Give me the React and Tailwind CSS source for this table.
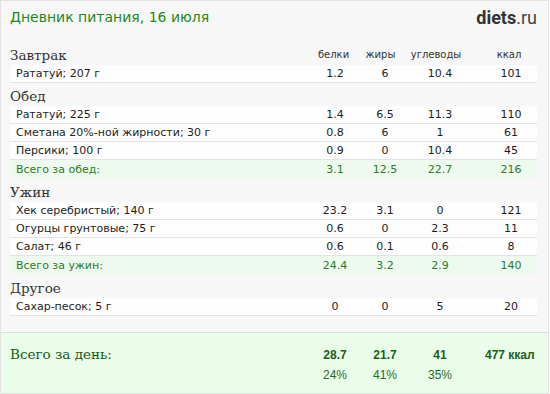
import React from 'react';

const sections = [
  {
    title: 'Завтрак',
    rows: [['Рататуй; 207 г', '1.2', '6', '10.4', '101']],
  },
  {
    title: 'Обед',
    rows: [
      ['Рататуй; 225 г', '1.4', '6.5', '11.3', '110'],
      ['Сметана 20%-ной жирности; 30 г', '0.8', '6', '1', '61'],
      ['Персики; 100 г', '0.9', '0', '10.4', '45'],
    ],
    total: ['Всего за обед:', '3.1', '12.5', '22.7', '216'],
  },
  {
    title: 'Ужин',
    rows: [
      ['Хек серебристый; 140 г', '23.2', '3.1', '0', '121'],
      ['Огурцы грунтовые; 75 г', '0.6', '0', '2.3', '11'],
      ['Салат; 46 г', '0.6', '0.1', '0.6', '8'],
    ],
    total: ['Всего за ужин:', '24.4', '3.2', '2.9', '140'],
  },
  {
    title: 'Другое',
    rows: [['Сахар-песок; 5 г', '0', '0', '5', '20']],
  },
];

const sans = { fontFamily: '"DejaVu Sans", Verdana, sans-serif' };
const serif = { fontFamily: '"DejaVu Serif", Georgia, serif' };

// Four number columns, same widths everywhere so values line up
function Cols({ values, className = '' }) {
  return (
    <>
      <div className={`w-[50px] text-center ${className}`}>{values[0]}</div>
      <div className={`w-[50px] text-center ${className}`}>{values[1]}</div>
      <div className={`w-[60px] text-center ${className}`}>{values[2]}</div>
      <div className={`ml-[15px] w-[52px] text-center ${className}`}>{values[3]}</div>
    </>
  );
}

function Row({ row, total = false }) {
  return (
    <div
      className={`flex h-[18px] items-center text-[11px] leading-none ${
        total ? 'bg-[#eefaee] text-[#2b7a2b]' : 'border-b border-[#e3e3e3] bg-[#fdfdfd] text-[#1e1e1e]'
      }`}
      style={sans}
    >
      <div className="flex-1 pl-[6px]">{row[0]}</div>
      <Cols values={row.slice(1)} />
    </div>
  );
}

function Section({ section, first }) {
  return (
    <div className={section.total ? 'mb-[1px]' : ''}>
      <div className="flex h-[23px] items-end pb-[3px]">
        <div className="flex-1 text-[13.5px] leading-none text-[#333]" style={serif}>
          {section.title}
        </div>
        {first && (
          <div className="flex pb-[2px] text-[10px] leading-none text-[#333]" style={sans}>
            <div className="w-[50px] pr-[3px] text-center">белки</div>
            <div className="w-[50px] pr-[9px] text-center">жиры</div>
            <div className="w-[60px] pr-[8px] text-center">углеводы</div>
            <div className="ml-[15px] w-[52px] pr-[4px] text-center">ккал</div>
          </div>
        )}
      </div>
      {section.rows.map((r, i) => (
        <Row key={i} row={r} />
      ))}
      {section.total && <Row row={section.total} total />}
    </div>
  );
}

export default function App() {
  return (
    <div className="flex h-[394px] w-[549px] flex-col border border-[#e2e2e2] bg-[#f7f7f7]">
      <div className="pl-[9px] pr-[11px]">
        {/* Header */}
        <div className="flex h-[41px] items-start justify-between pt-[9px]">
          <div className="text-[14px] leading-none text-[#1c8a1c]" style={sans}>
            Дневник питания, 16 июля
          </div>
          <div className="-mt-[1px] text-[18px] leading-none" style={{ fontFamily: 'Roboto, "Open Sans", sans-serif' }}>
            <span className="font-bold text-[#333]">diets</span>
            <span className="text-[#444]">.ru</span>
          </div>
        </div>

        {sections.map((s, i) => (
          <Section key={s.title} section={s} first={i === 0} />
        ))}
      </div>

      {/* Day total */}
      <div className="mt-auto h-[61px] border-t border-[#dcdcdc] bg-[#e9fde9] pl-[9px] pr-[11px] pt-[15px]">
        <div className="flex items-center">
          <div className="flex-1 text-[13.5px] leading-none text-[#145a14]" style={serif}>
            Всего за день:
          </div>
          <div
            className="flex text-[12px] font-bold leading-none text-[#1b5e1b]"
            style={{ fontFamily: '"Liberation Sans", Arial, sans-serif' }}
          >
            <div className="w-[50px] text-center">28.7</div>
            <div className="w-[50px] text-center">21.7</div>
            <div className="w-[60px] text-center">41</div>
            <div className="ml-[15px] w-[52px] whitespace-nowrap pr-[5px] text-right">477 ккал</div>
          </div>
        </div>
        <div
          className="mt-[7px] flex text-[12px] leading-none text-[#2a6a2a]"
          style={{ fontFamily: '"Liberation Sans", Arial, sans-serif' }}
        >
          <div className="flex-1" />
          <div className="w-[50px] text-center">24%</div>
          <div className="w-[50px] text-center">41%</div>
          <div className="w-[60px] text-center">35%</div>
          <div className="ml-[15px] w-[52px]" />
        </div>
      </div>
    </div>
  );
}
